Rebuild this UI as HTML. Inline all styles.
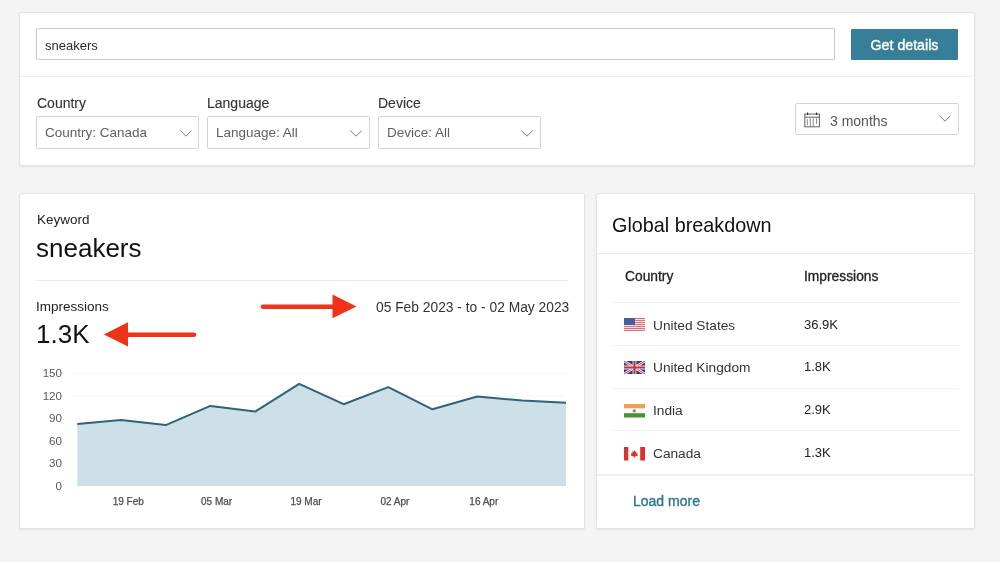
<!DOCTYPE html>
<html><head><meta charset="utf-8">
<style>
*{box-sizing:border-box;margin:0;padding:0}
html,body{-webkit-font-smoothing:antialiased;width:1000px;height:562px;overflow:hidden;background:#f4f4f4;font-family:"Liberation Sans",sans-serif;color:#222}
.card{position:absolute;background:#fff;border-radius:2px;border:1px solid #e4e4e4;box-shadow:0 1px 2px rgba(0,0,0,0.08)}
.abs{position:absolute;white-space:nowrap;will-change:transform}
.inp{position:absolute;border:1px solid #cbcbcb;border-radius:2px;background:#fff}
.sel{position:absolute;border:1px solid #d4d4d4;border-radius:2px;background:#fff}
.chev{position:absolute}
.lbl{font-size:14px;color:#333;-webkit-text-stroke:0.12px #333}
.hl{position:absolute;height:1px;background:#ececec}
</style></head><body>

<!-- top card -->
<div class="card" style="left:19px;top:12px;width:956px;height:154px">
</div>
<div class="inp" style="left:36px;top:28px;width:799px;height:32px"></div>
<div class="abs" style="left:45px;top:37.5px;font-size:13px;color:#2a2a2a">sneakers</div>
<div class="abs" style="left:851px;top:29px;width:107px;height:31px;background:#377e98;border-radius:1px;color:#fff;font-size:14.2px;-webkit-text-stroke:0.4px #fff;text-align:center;line-height:33px">Get details</div>
<div class="hl" style="left:20px;top:76px;width:955px;background:#efefef"></div>

<div class="abs lbl" style="left:37px;top:95px">Country</div>
<div class="abs lbl" style="left:207px;top:95px">Language</div>
<div class="abs lbl" style="left:378px;top:95px">Device</div>

<div class="sel" style="left:36px;top:116px;width:163px;height:33px"></div>
<div class="abs" style="left:45px;top:125px;font-size:13.5px;color:#606060">Country: Canada</div>
<svg class="chev" style="left:180px;top:130px" width="12" height="8"><path d="M0.4 0.6 L6 6.2 L11.6 0.6" fill="none" stroke="#7a7a7a" stroke-width="1"/></svg>

<div class="sel" style="left:207px;top:116px;width:163px;height:33px"></div>
<div class="abs" style="left:216px;top:125px;font-size:13.5px;color:#606060">Language: All</div>
<svg class="chev" style="left:350px;top:130px" width="12" height="8"><path d="M0.4 0.6 L6 6.2 L11.6 0.6" fill="none" stroke="#7a7a7a" stroke-width="1"/></svg>

<div class="sel" style="left:378px;top:116px;width:163px;height:33px"></div>
<div class="abs" style="left:387px;top:125px;font-size:13.5px;color:#606060">Device: All</div>
<svg class="chev" style="left:521px;top:130px" width="12" height="8"><path d="M0.4 0.6 L6 6.2 L11.6 0.6" fill="none" stroke="#7a7a7a" stroke-width="1"/></svg>

<div class="sel" style="left:795px;top:103px;width:164px;height:32px"></div>
<svg class="abs" style="left:800px;top:108px" width="25" height="24" viewBox="0 0 25 24">
 <rect x="4.8" y="6.1" width="14.6" height="12.7" fill="none" stroke="#5f5f5f" stroke-width="1"/>
 <path d="M4.8 9.2H19.4" stroke="#666" stroke-width="1.1"/>
 <rect x="6.9" y="4.5" width="1.3" height="2.6" rx="0.5" fill="#333"/>
 <rect x="15.9" y="4.5" width="1.3" height="2.6" rx="0.5" fill="#333"/>
 <path d="M7.3 11.2V17.2 M10.3 10.3V18.3 M13.2 10.3V18.3 M16.5 10.3V15.8" stroke="#7a7a7a" stroke-width="0.9"/>
</svg>
<div class="abs" style="left:830px;top:113px;font-size:14px;color:#555">3 months</div>
<svg class="chev" style="left:939px;top:115px" width="12" height="8"><path d="M0.4 0.6 L6 6.2 L11.6 0.6" fill="none" stroke="#7a7a7a" stroke-width="1"/></svg>

<!-- keyword card -->
<div class="card" style="left:19px;top:193px;width:566px;height:336px"></div>
<div class="abs" style="left:37px;top:212px;font-size:13.5px;color:#222">Keyword</div>
<div class="abs" style="left:36px;top:233px;font-size:26px;color:#111">sneakers</div>
<div class="hl" style="left:36px;top:280px;width:532px;background:#e9e9e9"></div>
<div class="abs" style="left:36px;top:299px;font-size:13.5px;color:#222">Impressions</div>
<div class="abs" style="left:36px;top:319px;font-size:26px;color:#111">1.3K</div>
<div class="abs" style="left:376px;top:300px;font-size:13.8px;color:#333">05 Feb 2023 - to - 02 May 2023</div>

<!-- arrows -->
<svg class="abs" style="left:0;top:0" width="1000" height="562">
 <path d="M263 306.7 H334" stroke="#ee3418" stroke-width="4.6" stroke-linecap="round"/>
 <path d="M332.5 294.6 L356.5 306.5 L332.5 318.2 Z" fill="#ee3418"/>
 <path d="M194 334.7 H126" stroke="#ee3418" stroke-width="4.6" stroke-linecap="round"/>
 <path d="M128 322.2 L103.8 334.5 L128 346.5 Z" fill="#ee3418"/>
</svg>

<!-- chart -->
<svg class="abs" style="left:0;top:0" width="1000" height="562">
 <g stroke="#f4f4f4" stroke-width="1">
  <path d="M72.5 373.5H566 M72.5 396H566"/>
 </g>
 <path d="M77.3 423.9 L121 419.9 L165.7 425.1 L210.4 405.9 L255.1 411.6 L299.2 383.8 L343.6 404.2 L388.3 387.1 L432.5 409.3 L477.2 396.5 L522.3 400.5 L566 402.8 L566 486 L77.3 486 Z" fill="#cde0e7"/>
 <path d="M77.3 423.9 L121 419.9 L165.7 425.1 L210.4 405.9 L255.1 411.6 L299.2 383.8 L343.6 404.2 L388.3 387.1 L432.5 409.3 L477.2 396.5 L522.3 400.5 L566 402.8" fill="none" stroke="#2c6479" stroke-width="2" stroke-linejoin="round"/>
 <g font-family="Liberation Sans" font-size="11.6" fill="#585858" text-anchor="end">
  <text x="62" y="377.3">150</text>
  <text x="62" y="399.7">120</text>
  <text x="62" y="422.3">90</text>
  <text x="62" y="444.8">60</text>
  <text x="62" y="467.3">30</text>
  <text x="62" y="489.8">0</text>
 </g>
 <g font-family="Liberation Sans" font-size="10" fill="#4d4d4d" stroke="#4d4d4d" stroke-width="0.25" text-anchor="middle">
  <text x="128.2" y="504.6">19 Feb</text>
  <text x="216.6" y="504.6">05 Mar</text>
  <text x="306" y="504.6">19 Mar</text>
  <text x="394.9" y="504.6">02 Apr</text>
  <text x="483.8" y="504.6">16 Apr</text>
 </g>
</svg>

<!-- global breakdown card -->
<div class="card" style="left:596px;top:193px;width:379px;height:336px"></div>
<div class="abs" style="left:612px;top:214px;font-size:19.8px;color:#111">Global breakdown</div>
<div class="hl" style="left:597px;top:253px;width:378px;background:#ececec"></div>
<div class="abs" style="left:625px;top:269px;font-size:13.8px;color:#222;-webkit-text-stroke:0.3px #222">Country</div>
<div class="abs" style="left:804px;top:269px;font-size:13.8px;color:#222;-webkit-text-stroke:0.3px #222">Impressions</div>
<div class="hl" style="left:612px;top:302px;width:347px;background:#efefef"></div>


<!-- rows -->
<svg class="abs" style="left:624px;top:318px" width="21" height="13" viewBox="0 0 21 13">
 <rect width="21" height="13" fill="#f6dede"/>
 <g fill="#d9747c"><rect y="0" width="21" height="1"/><rect y="2" width="21" height="1"/><rect y="4" width="21" height="1"/><rect y="6" width="21" height="1"/><rect y="8" width="21" height="1"/><rect y="10" width="21" height="1"/><rect y="12" width="21" height="1"/></g>
 <rect width="11" height="7" fill="#46609c"/>
</svg>
<div class="abs" style="left:653px;top:318px;font-size:13.7px;color:#333">United States</div>
<div class="abs" style="left:804px;top:317px;font-size:13px;color:#222">36.9K</div>
<div class="hl" style="left:612px;top:345px;width:347px;background:#f1f1f1"></div>

<svg class="abs" style="left:624px;top:361px" width="21" height="13" viewBox="0 0 21 13">
 <rect width="21" height="13" fill="#2c3a7c"/>
 <path d="M0 0L21 13M21 0L0 13" stroke="#f2e6ee" stroke-width="2.6"/>
 <path d="M0 0L21 13M21 0L0 13" stroke="#c33c52" stroke-width="0.9"/>
 <path d="M10.5 0V13M0 6.5H21" stroke="#f2e6ee" stroke-width="3.8"/>
 <path d="M10.5 0V13M0 6.5H21" stroke="#c0333f" stroke-width="2.1"/>
</svg>
<div class="abs" style="left:653px;top:360px;font-size:13.7px;color:#333">United Kingdom</div>
<div class="abs" style="left:804px;top:359px;font-size:13px;color:#222">1.8K</div>
<div class="hl" style="left:612px;top:388px;width:347px;background:#f1f1f1"></div>

<svg class="abs" style="left:624px;top:403.5px" width="21" height="13.5" viewBox="0 0 21 13.5">
 <rect width="21" height="13.5" fill="#fbfbf6"/>
 <rect width="21" height="4.3" fill="#e9a24f"/>
 <rect y="9.2" width="21" height="4.3" fill="#479339"/>
 <circle cx="10.3" cy="6.7" r="1.5" fill="#6b74a8"/>
</svg>
<div class="abs" style="left:653px;top:403px;font-size:13.7px;color:#333">India</div>
<div class="abs" style="left:804px;top:402px;font-size:13px;color:#222">2.9K</div>
<div class="hl" style="left:612px;top:430px;width:347px;background:#f1f1f1"></div>

<svg class="abs" style="left:624px;top:446.5px" width="21" height="13.5" viewBox="0 0 21 13.5">
 <rect width="21" height="13.5" fill="#fff"/>
 <rect width="4.3" height="13.5" fill="#d8322e"/>
 <rect x="16.2" width="4.8" height="13.5" fill="#d8322e"/>
 <path d="M10.3 3 L11.2 4.8 L12.4 4.3 L12 6.6 L13.6 6 L13.2 7.6 L14.3 8 L11.8 9.6 L10.6 9.4 V11 H10 V9.4 L8.8 9.6 L6.3 8 L7.4 7.6 L7 6 L8.6 6.6 L8.2 4.3 L9.4 4.8 Z" fill="#d8322e"/>
</svg>
<div class="abs" style="left:653px;top:446px;font-size:13.7px;color:#333">Canada</div>
<div class="abs" style="left:804px;top:445px;font-size:13px;color:#222">1.3K</div>
<div class="hl" style="left:597px;top:474px;width:378px;height:2px;background:#f0f0f0"></div>

<div class="abs" style="left:633px;top:493px;font-size:14px;color:#2c7692;-webkit-text-stroke:0.35px #2c7692">Load more</div>
</body></html>
